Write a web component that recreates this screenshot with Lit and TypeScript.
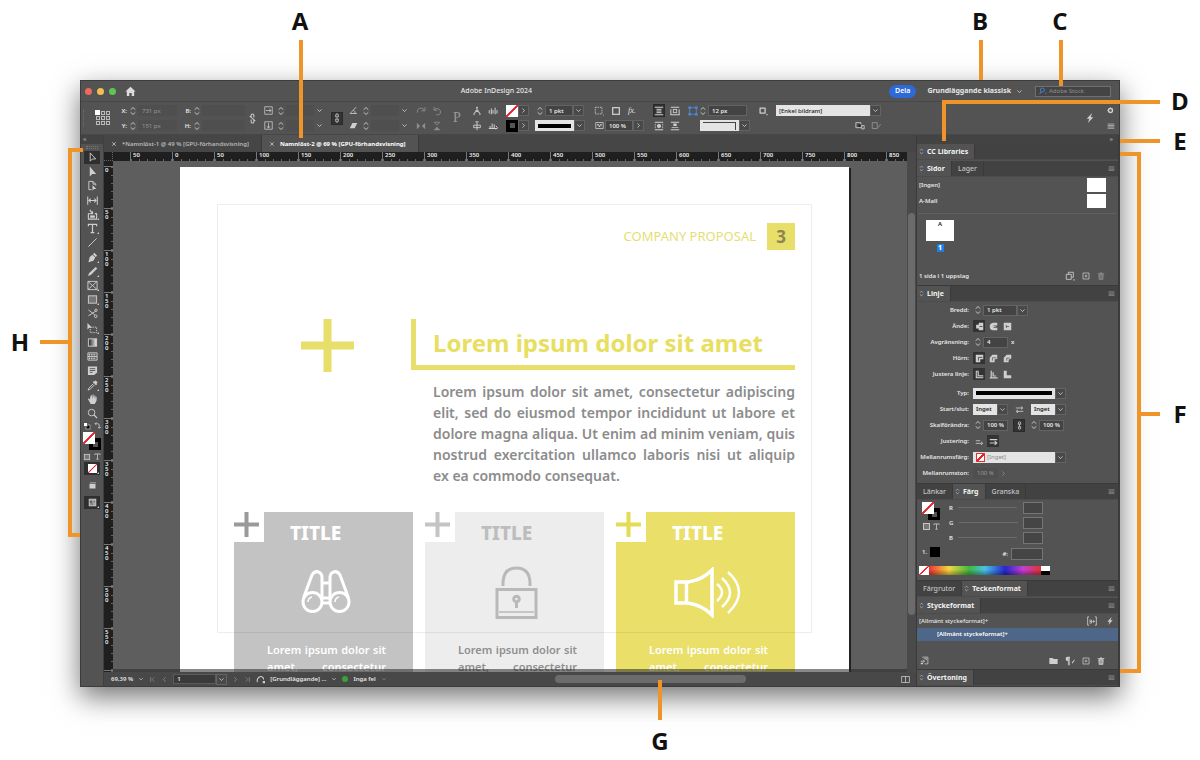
import { LitElement, html, svg, css, nothing } from "lit";
import { customElement, state } from "lit/decorators.js";
import { classMap } from "lit/directives/class-map.js";

const stroke = (d: string, w = 1) =>
  svg`<path d=${d} fill="none" stroke="currentColor" stroke-width=${w} stroke-linejoin="round" />`;
const fill = (d: string) => svg`<path d=${d} fill="currentColor" />`;

/* Every glyph is drawn on a 12 x 12 grid. */
const glyphs: Record<string, unknown> = {
  select: stroke("M3.5 1v9l2.4-2.4h3.6z"),
  direct: fill("M3 .5v11l2.8-2.9H10z"),
  page: [stroke("M5 10.500H2v-9h4.500l3 3V6M6.500 1.500v3h3"), fill("M6 5.500v6l1.700-1.600h2.500z")],
  gap: stroke("M.8 1.500v9M11.200 1.500v9M2 6h8M4 4 2 6l2 2M8 4l2 2-2 2", 1.1),
  collect: [stroke("M1.500 5v6h9V5H8.500M1.500 5H3M4 8.500h4M3 1l3 4M6 2.500V5H3.500", 1.200), fill("M3.500 7h5v2.500h-5z")],
  type: stroke("M1.500 3.500V1.600h9v1.900M6 1.600v9M4 10.600h4", 1.3),
  line: stroke("M1.500 10.500l9-9", 1),
  pen: [fill("M8 .8 11 4 9.500 5.500 6.500 2.500zM6 3l3 3-2 3.500-5.500 1.700L3 5.500z")],
  pencil: fill("M9.500 1 11.200 2.700 4.500 9.600 1 11l1.400-3.500zM9 .7z"),
  frame: stroke("M1 1.500h10v9H1zM1 1.500l10 9M11 1.500l-10 9"),
  rect: [svg`<rect x="1.500" y="2" width="9" height="8" fill="#777" stroke="currentColor" />`],
  scissors: [stroke("M1.500 2l7 5.500M1.500 8.500l8-5"), svg`<circle cx="9.500" cy="9" r="1.500" fill="none" stroke="currentColor" /><circle cx="9.800" cy="2.500" r="1.300" fill="none" stroke="currentColor" />`],
  transform: [svg`<path d="M3.500 4.500h7v6h-7z" fill="none" stroke="currentColor" stroke-dasharray="1.500 1" />`, fill("M.5 0v7l2-1.800h3z")],
  gradient: [svg`<defs><linearGradient id="gr"><stop offset="0" stop-color="#222" /><stop offset="1" stop-color="#eee" /></linearGradient></defs><rect x="1.500" y="2" width="9" height="8" fill="url(#gr)" stroke="currentColor" />`],
  feather: [stroke("M1 2h10v8H1zM1 6h10"), svg`<path d="M2 4h8M2 8h8" stroke="currentColor" stroke-width="2" stroke-dasharray="1.500 1" />`],
  note: svg`<path d="M1 1.500h10V8L8 11H1z" fill="currentColor" /><path d="M3 4h6M3 6h6M3 8h3" stroke="#535353" />`,
  dropper: [fill("M8 1.500 9.500.5l2 2-1 1.500.5.500-1.200 1.200-3.500-3.500L7.500 1z"), stroke("M7 4 2 9l-.8 2L3.500 10l5-5")],
  hand: fill("M3 6 1.500 4.500 1 5.500 4 11h4.500L10.500 7V3H9.500v3L9 1.500H8V5.500L7 .5H6l.2 5L5 1.200 4 1.500z"),
  zoom: [svg`<circle cx="5" cy="5" r="3.600" fill="none" stroke="currentColor" />`, stroke("M7.700 7.700 11 11", 1.4)],
  swap: stroke("M3 2.500h4q2.500 0 2.500 3.500v3M5 .5l-2 2 2 2M7.500 7.500l2 2 2-2", 1.2),
  mini: [svg`<rect x="4.500" y="4.500" width="6" height="6" fill="#000" stroke="currentColor" /><rect x="1" y="1" width="6" height="6" fill="#fff" stroke="#333" />`],
  box: svg`<rect x="2" y="2" width="8" height="8" fill="#777" stroke="currentColor" stroke-width="1.200" />`,
  screen: [fill("M2 4h8v6H2z"), stroke("M2.500 2.500h8")],
  preview: [svg`<rect x="1.500" y="1.500" width="9" height="9" fill="#aaa" stroke="currentColor" />`, svg`<path d="M3 4h2v2H3zM7 5h2M3 8h4" stroke="#444" fill="none" />`],
  home: fill("M6 .8 11.500 6H10v5H7.300V7.500H4.700V11H2V6H.5z"),
  down: stroke("M2.500 4.200 6 7.800l3.500-3.600", 1.4),
  right: stroke("M4.200 2.500 7.800 6 4.200 9.500", 1.4),
  left: stroke("M7.800 2.500 4.200 6l3.600 3.500", 1.4),
  first: stroke("M3 2v8M9 2.500 5.500 6 9 9.500", 1.3),
  last: stroke("M9 2v8M3 2.500 6.500 6 3 9.500", 1.3),
  spin: stroke("M2.500 4 6 .8 9.500 4M2.500 8 6 11.200 9.500 8", 1.3),
  sort: stroke("M3.500 4.500 6 2l2.500 2.500M3.500 7.500 6 10l2.500-2.500", 1.1),
  close: stroke("M2.500 2.500l7 7M9.500 2.500l-7 7", 1.5),
  menu: stroke("M1 3h10M1 5.200h10M1 7.400h10M1 9.500h10", 1),
  bolt: fill("M8.500 0 2 7h3.200L3.500 12 10 5H6.800z"),
  gear: svg`<circle cx="6" cy="6" r="3.400" fill="none" stroke="currentColor" stroke-width="2.400" /><path d="M6 0v12M0 6h12M2 2l8 8M10 2l-8 8" stroke="currentColor" stroke-dasharray="1.800 20" />`,
  chain: stroke("M4.500 5V2.500q0-1.500 1.500-1.500t1.500 1.500V5M4.500 7v2.500q0 1.500 1.500 1.500t1.500-1.500V7M6 3.500v5", 1.1),
  unchain: stroke("M4.500 5V2.500q0-1.500 1.500-1.500t1.500 1.500V5M4.500 7v2.500q0 1.500 1.500 1.500t1.500-1.500V7M3 3.500l6 5", 1.1),
  scaleX: stroke("M1 1v10M11 1v10M1 1h10M1 11h10M2.500 6h7M7 4l2.500 2L7 8", 1),
  scaleY: stroke("M1 1h10v10H1zM6 2.500v7M4 7l2 2.500L8 7", 1),
  angle: stroke("M9.500 1.500 1.500 10h9M6 5.500q2.500 1.500 2 4.500", 1.1),
  shear: fill("M4.500 2.500H11L7.500 9.500H1z"),
  cw: stroke("M1.500 8q0-5.500 4.500-5.500 3 0 4 3M10.800 1.500v4.300H6.500", 1.1),
  ccw: stroke("M3 4.500Q5 2 8 3.500t2 5-5 1.500M2.500 1v4h4", 1.1),
  flipH: [fill("M1 2l4 4-4 4zM11 2 7 6l4 4z")],
  flipV: [fill("M2 11l4-4 4 4z"), stroke("M2.500 1.500h7L6 5z")],
  tree: stroke("M6 1v5M3.500 6h5M2.500 11V8.500L6 6l3.500 2.500V11M5 2h2", 1.2),
  tree2: stroke("M6 1v10M2 5h8v3H2zM4 1h4", 1.1),
  bars: stroke("M1.500 5v4M4 3v7M6 5v4M8.500 2v8M10.800 5v4", 1.2),
  bars2: stroke("M1 9h10M2.500 9V6M5 9V3M7.500 9V4M9.500 6l2 2-2 2", 1.2),
  dashed: svg`<rect x="1.500" y="1.500" width="8" height="8" fill="none" stroke="currentColor" stroke-dasharray="1.800 1" /><path d="M11 11h1" stroke="currentColor" />`,
  square: svg`<rect x="2" y="2" width="8" height="8" fill="none" stroke="currentColor" stroke-width="1.500" />`,
  opacity: [stroke("M1 2h10v8H1z"), svg`<path d="M3 4h2v2H3zM7 4h2v2H7zM5 6h2v2H5z" fill="currentColor" />`],
  wrap1: stroke("M1 1.500h10M3 4h6M3 6h6M3 8h6M1 10.500h10", 1.2),
  wrap2: [stroke("M1 1.500h10M1 4v7M11 4v7M1 10.500h10", 1.200), svg`<rect x="4" y="4" width="4" height="4" fill="none" stroke="currentColor" />`],
  wrap3: [stroke("M1 1.500h10M1 10.500h10M1 4h1M1 6h1M1 8h1M10 4h1M10 6h1M10 8h1", 1.200), svg`<circle cx="6" cy="6" r="2.500" fill="currentColor" />`],
  wrap4: [stroke("M1 1.500h10M1 10.500h10", 1.200), fill("M4 3h4v3H4zM2 7.500h8v1H2z")],
  corner: [stroke("M2 2h8v8H2z"), fill("M.5.5h3v3h-3zM8.500.5h3v3h-3zM.5 8.500h3v3h-3zM8.500 8.500h3v3h-3z")],
  objstyle: [stroke("M2.500 2.500h6v6h-6z", 1.5), fill("M10 9.500h1.500V11H10z")],
  clear: [stroke("M1 2h6v6H1z"), svg`<path d="M4 4h3v3H4z" fill="#222" /><path d="M8 5.500h3v4H8z" fill="none" stroke="currentColor" />`],
  edit: stroke("M1.500 2h6v7h-6zM8.500 8l3-4", 1.2),
  search: [svg`<circle cx="5" cy="4.500" r="3" fill="none" stroke="currentColor" stroke-width="1.200" />`, stroke("M3 7 1 10.500M9 9.500h2", 1.4)],
  capA: svg`<path d="M5 1h6v10H5V8.500H1.500v-5H5z" fill="currentColor" /><path d="M6 6h4" stroke="#333" />`,
  capB: svg`<path d="M5.500 1H11v3.500H6v3h5V11H5.500Q1 10.500 1 6t4.500-5z" fill="currentColor" /><path d="M5 6h4" stroke="currentColor" />`,
  capC: svg`<path d="M1 1h10v10H1z" fill="currentColor" /><path d="M4 6h4M4.500 4v4" stroke="#555" />`,
  joinA: svg`<path d="M1 1h10v6H7v4H1z" fill="currentColor" /><path d="M4.500 9V4.500H10" stroke="#333" fill="none" />`,
  joinB: svg`<path d="M4.500 1H11v5.500L7.500 7v4H1V5z" fill="currentColor" /><path d="M4.500 9V5H10" stroke="#555" fill="none" />`,
  joinC: svg`<path d="M5 1h6v5L7.500 7.500V11H1V5z" fill="currentColor" /><path d="M5 9V5.500H9" stroke="#555" fill="none" />`,
  alignA: svg`<path d="M1 1h4v6h6v4H1z" fill="currentColor" /><path d="M3 2v7h8" stroke="#333" fill="none" />`,
  alignB: stroke("M3 1v9.500h8.500M5.500 3v5h4M1 10.500h2", 1.6),
  alignC: svg`<path d="M1 1h4v6h6v4H1z" fill="currentColor" />`,
  swapLR: stroke("M1 4h9M8 2l2.500 2L8 6M11 8.500H2M4 6.500 1.500 8.500l2.500 2", 1.1),
  arrowA: stroke("M1 5h6M1 8.500h8M8 6.500l2.500 2-2.500 2", 1.1),
  arrowB: stroke("M1 3.500h10M1 8h8M7.500 5.500l3 2.500-3 2.500", 1.4),
  sheets: [stroke("M1.500 4h6v6h-6z"), stroke("M4 4V1.500h6v6H8", 1), fill("M10 10h1.500v1.500H10z")],
  plusbox: stroke("M1.500 1.500h9v9h-9zM6 4v4M4 6h4", 1.1),
  trash: svg`<path d="M2 3.500h8l-.7 8H2.700zM1 2h10v1H1zM4.500.8h3v1h-3z" fill="currentColor" /><path d="M4.500 5v5M6 5v5M7.500 5v5" stroke="#535353" stroke-width=".7" />`,
  folder: fill("M.5 2.500h4.500l1 1.500h5.500v6.500H.5z"),
  pilcrow: [fill("M5 1H3Q.8 1.200.8 3.500T3 6h.5v5h1V2h.7v9H6V1zM8 8l3.500-4v1.500L9 9z")],
  load: [stroke("M3 1.500h7.500v9H6M1 7h5M4 5l2 2-2 2M5.500 3.500h3v2"), fill("M1 9h3v2H1z")],
  aplus: stroke("M2.500 1H.8v10h1.700M9.500 1h1.700v10H9.500M3 8.500h2.500V5H3M3 6.700h2.500M6.500 6.500h3M8 5v3", 1),
  spread: stroke("M.8 2h10.400v8H.8zM6 2v8", 1),
  sync: [stroke("M2 9.500Q.5 5.500 4 3t6 1.500V6", 1.4), fill("M9 8h3v3H9z")],
};

const icon = (name: string, size = 10, tone = "") =>
  html`<svg class="icon ${tone}" width=${size} height=${size} viewBox="0 0 12 12" aria-hidden="true">${glyphs[name]}</svg>`;

interface Tool { name: string; label: string; more?: boolean }

const tools: Tool[] = [
  { name: "select", label: "Markering" },
  { name: "direct", label: "Direktmarkering" },
  { name: "page", label: "Sida" },
  { name: "gap", label: "Mellanrum" },
  { name: "collect", label: "Innehållsinsamlare", more: true },
  { name: "type", label: "Text", more: true },
  { name: "line", label: "Linje" },
  { name: "pen", label: "Ritstift", more: true },
  { name: "pencil", label: "Penna", more: true },
  { name: "frame", label: "Rektangelram", more: true },
  { name: "rect", label: "Rektangel", more: true },
  { name: "scissors", label: "Sax" },
  { name: "transform", label: "Omforma", more: true },
  { name: "gradient", label: "Övertoning" },
  { name: "feather", label: "Övertoningskant" },
  { name: "note", label: "Anteckning" },
  { name: "dropper", label: "Pipett", more: true },
  { name: "hand", label: "Hand" },
  { name: "zoom", label: "Zoom" },
];

const paragraph = [
  "Lorem ipsum dolor sit amet, consectetur adipiscing",
  "elit, sed do eiusmod tempor incididunt ut labore et",
  "dolore magna aliqua. Ut enim ad minim veniam, quis",
  "nostrud exercitation ullamco laboris nisi ut aliquip",
  "ex ea commodo consequat.",
];

const pictures: Record<string, unknown> = {
  binoculars: html`<svg width="50" height="44" viewBox="0 0 50 44" fill="none" stroke="#fff" stroke-width="3">
    <circle cx="11.500" cy="32" r="9.500" /><circle cx="38.500" cy="32" r="9.500" />
    <path d="M2.500 28 11 5q3-5 7.500-2.500 2.500 1.500 2.500 5V30M47.500 28 39 5q-3-5-7.500-2.500-2.500 1.500-2.500 5V30M21 13h8M21 28h8M21 33h8" />
    <path d="M7 32q0-4 4-5M34 32q0-4 4-5" stroke-width="1.500" /></svg>`,
  lock: html`<svg width="43" height="53" viewBox="0 0 43 53" fill="none" stroke="#b9b9b9" stroke-width="3">
    <path d="M2 23.500h39v28H2zM8 20v-4Q9 2 21.500 2T35 16v4" /><path d="M4 46h35" stroke-width="1.500" />
    <circle cx="21.500" cy="33" r="2.800" stroke-width="3" /><path d="M21.500 35v7" /></svg>`,
  speaker: html`<svg width="67" height="51" viewBox="0 0 67 51" fill="none" stroke="#fff" stroke-width="3.500">
    <path d="M2 15h12Q28 13 38 3v45Q28 38 14 36H2zM12.500 15v21" />
    <path d="M43 17q10 8 0 17M48 11q16 15 0 29M54 5q22 20 0 41" stroke-width="2.500" /></svg>`,
};

const cards = [
  { tone: "dark", mark: "#9a9a9a", picture: "binoculars" },
  { tone: "pale", mark: "#c4c4c4", picture: "lock" },
  { tone: "yellow", mark: "#e5dc55", picture: "speaker" },
];

@customElement("app-root")
export class AppRoot extends LitElement {
  @state() private tool = "select";

  static styles = css`
    :host {
      --bar: #535353;
      --deep: #434343;
      --ink: #e6e6e6;
      --gold: #e8de6a;
      display: block;
      position: relative;
      min-height: 100vh;
      background: #fff;
      font: 600 6px/8px "Noto Sans", "Open Sans", sans-serif;
      color: var(--ink);
      overflow: hidden;
    }
    * { box-sizing: border-box; }
    h1, h2, h3, p { margin: 0; font: inherit; }
    button, input, select { font: inherit; color: inherit; margin: 0; padding: 0; border: 0; border-radius: 0; background: none; min-width: 0; }
    button { display: inline-flex; align-items: center; justify-content: center; }
    select { appearance: none; }
    svg { display: block; flex: none; }
    .icon { color: #cfcfcf; }
    .dim { color: #8c8c8c; }
    .blue { color: #4a8be0; }

    .window { display: flex; flex-direction: column; margin: 80px 80px 73px; background: var(--bar); border: 1px solid #3c3c3c; box-shadow: 0 10px 26px rgba(0, 0, 0, 0.55); }
    .row { display: flex; align-items: center; }

    /* title bar */
    .title { display: grid; grid-template-columns: 11fr auto 17fr; align-items: center; height: 21px; border-bottom: 1px solid #484848; font: 500 7px/10px "Noto Sans", sans-serif; }
    .title .start { gap: 5px; padding-left: 4px; }
    .lamp { width: 7px; height: 7px; border-radius: 50%; }
    .red { background: #ec6a5e; }
    .amber { background: #f4bf4f; }
    .green { background: #61c554; }
    .start .icon { margin-left: 4px; color: #dcdcdc; }
    .title .end { justify-content: flex-end; padding-right: 8px; }
    .share { height: 13px; padding: 0 6px; border-radius: 7px; background: #2e69d8; color: #fff; font-weight: 600; }
    .workspace { gap: 5px; margin: 0 12px 0 11px; font-weight: 700; white-space: nowrap; }
    .stock { gap: 2px; width: 76px; height: 11px; padding-left: 3px; border: 1px solid #707070; background: #444; font-size: 6px; font-weight: 400; }
    .stock input { width: 60px; }
    ::placeholder { color: #8f8f8f; opacity: 1; }

    /* control strip */
    .control { display: grid; grid-template-columns: 34px 64px 64px 18px 67px 18px 65px 36px 20px 36px 32px 56px 58px 36px 70px 130px 1fr; align-items: center; height: 33px; border-bottom: 1px solid #474747; }
    .pair { display: grid; grid-template-rows: 15px 15px; align-items: center; }
    .pair.quad { grid-template-columns: 16px 16px; justify-content: center; justify-items: center; }
    .line { display: flex; align-items: center; }
    .lined { padding-left: 3px; }
    .spaced { gap: 3px; }
    .loose { gap: 7px; }
    .grip { width: 2px; height: 16px; border-left: 1px dotted #6d6d6d; }
    .anchor { gap: 10px; padding-left: 2px; }
    .lead { width: 12px; text-align: right; margin-right: 1px; }
    .field { display: flex; align-items: center; height: 12px; }
    .field > .icon { margin: 0 1px; }
    .field input { height: 11px; padding-left: 3px; background: #434343; border: 1px solid #636363; }
    .ghost input { border-color: transparent; background: #4f4f4f; color: #999; font-weight: 400; }
    .drop { flex: none; width: 11px; height: 11px; background: #494949; border: 1px solid #636363; }
    .ghost .drop { background: none; border-color: transparent; }
    .pressed { background: #333; border: 1px solid #2a2a2a; }
    .w1 { width: 25px; }
    .w2 { width: 28px; }
    .w3 { width: 34px; }
    .w4 { width: 39px; }
    .w5 { width: 43px; }
    .white { display: flex; align-items: center; height: 11px; background: #e4e4e4; color: #222; padding: 0 3px; }
    .white.style { width: 39px; }
    .bar { flex: 1; height: 4px; background: #000; }
    .white.edge { width: 39px; }
    .edge span { flex: 1; height: 8px; border-top: 1px solid #444; border-right: 1px solid #444; }
    .edged { padding-left: 15px; }
    .obj { width: 94px; margin-left: 8px; font-weight: 500; }
    .none { display: block; background: linear-gradient(to bottom right, #fff 44%, #e3262f 46%, #e3262f 54%, #fff 56%); }
    .none.small { width: 9px; height: 9px; }
    .none.framed { flex: none; width: 9px; height: 9px; border: 1px solid #d33; background: linear-gradient(to bottom right, #fff 40%, #e3262f 42%, #e3262f 58%, #fff 60%); }
    .sw { width: 12px; height: 12px; }
    .ink { display: grid; place-items: center; background: #000; }
    .ink::after { content: ""; width: 5px; height: 5px; background: #555; }
    .big { font: 14px/26px "Liberation Serif", serif; color: #9a9a9a; justify-self: center; }
    .fx { font: italic 8px/10px "Liberation Serif", serif; }
    .tight { width: 12px; height: 13px; }
    .centre { justify-self: center; }
    .farend { display: flex; align-items: center; justify-content: flex-end; gap: 6px; padding-right: 4px; }
    .farend.apart { gap: 12px; }

    /* work area */
    .work { display: grid; grid-template-columns: 23px minmax(0, 1fr) 203px; flex: 1; }
    .toolbox { display: flex; flex-direction: column; align-items: center; border-right: 1px solid #3f3f3f; }
    .strip { align-self: stretch; height: 9px; background: var(--deep); color: #aaa; padding: 0 2px; line-height: 8px; }
    .dots { width: 12px; height: 3px; margin: 2px 0; border-top: 1px dotted #777; border-bottom: 1px dotted #777; }
    .tools { display: flex; flex-direction: column; justify-content: space-between; min-height: 269px; }
    .tool { position: relative; width: 16px; height: 13px; }
    .tool.on { background: #2f2f2f; }
    .more::after { content: ""; position: absolute; right: 1px; bottom: 1px; border: 1px solid transparent; border-right-color: #ccc; border-bottom-color: #ccc; }
    .swatches { position: relative; display: flex; width: 18px; height: 18px; margin: 1px 0; }
    .swatches .ink { width: 12px; height: 12px; margin: 6px 0 0 6px; }
    .swatches .none { position: absolute; top: 0; left: 0; width: 12px; height: 12px; }
    .minor { justify-content: space-between; width: 18px; height: 11px; }
    .gapped { margin-top: 4px; }

    .doc { display: grid; grid-template: 17px 9px minmax(0, 1fr) 14px / 9px minmax(0, 1fr) 9px; }
    .tabs { grid-column: 1 / -1; display: flex; background: #464646; }
    .tabs button { gap: 5px; padding: 0 12px 0 7px; color: #b9b9b9; border-right: 1px solid #3b3b3b; white-space: nowrap; }
    .tabs button.on { background: var(--bar); color: #fff; font-weight: 700; }
    .ruler { background: #1f1f1f; color: #eee; overflow: hidden; }
    .cornerbox { border-right: 1px dotted #666; border-bottom: 1px dotted #666; }
    .ruler.h { display: flex; padding-left: 17px; }
    .ruler.h span { flex: none; width: 42px; padding-left: 2px; line-height: 7px; border-left: 1px solid #777; background: repeating-linear-gradient(90deg, #666 0 1px, transparent 1px 8px) bottom / 100% 2px no-repeat; }
    .ruler.v { display: flex; flex-direction: column; padding-top: 5px; height: 0; min-height: 100%; }
    .ruler.v span { flex: none; height: 42px; padding: 1px 0 0 1px; border-top: 1px solid #777; line-height: 5px; background: repeating-linear-gradient(#666 0 1px, transparent 1px 8px) right / 2px 100% no-repeat; }
    .ruler.v i { display: block; font-style: normal; height: 5px; }
    .scroll-v { display: flex; padding: 52px 1px 57px; background: #4a4a4a; }
    .scroll-v div { flex: 1; border-radius: 4px; background: #6b6b6b; }
    .upper { grid-row: 2; grid-column: 3; background: #4a4a4a; }
    .canvas { position: relative; display: flex; background: #5e5e5e; padding: 6px 58px 0 67px; overflow: hidden; height: 0; min-height: 100%; }
    .canvas::after { content: ""; position: absolute; inset: auto 0 0; height: 3px; background: rgba(40, 40, 40, 0.55); }

    /* the laid-out page */
    .sheet { position: relative; flex: 1; height: 505px; padding: 56px 54px 0; background: #fff; box-shadow: 2px 1px 0 #222; color: #8b8b8b; overflow: hidden; }
    .guides { position: absolute; inset: 37px 37px auto; height: 429px; border: 1px solid rgba(0, 0, 0, 0.07); }
    .masthead { display: flex; justify-content: flex-end; align-items: center; gap: 11px; color: #e6de74; font: 400 13px/27px "Noto Sans", sans-serif; }
    .masthead strong { width: 28px; text-align: center; background: var(--gold); color: #8b8552; font: 700 17px/27px "Noto Sans", sans-serif; }
    .hero { display: grid; grid-template-columns: 53px minmax(0, 384px); justify-content: end; gap: 57px; margin-top: 69px; }
    .hero h1 { height: 51px; padding-left: 17px; border-left: 5px solid var(--gold); border-bottom: 5px solid var(--gold); color: #e8de5f; font: 700 24px/48px "Noto Sans", sans-serif; white-space: nowrap; }
    .copy { width: 362px; margin: 9px 0 0 auto; font: 600 14px/21px "Noto Sans", sans-serif; color: #8c8c8c; }
    .copy span { display: block; text-align-last: justify; white-space: nowrap; }
    .copy span:last-child { text-align-last: left; }
    .cards { display: grid; grid-template-columns: repeat(3, minmax(0, 1fr)); gap: 12px; margin-top: 26px; }
    .card { display: grid; grid-template: 42px 76px auto / 30px minmax(0, 1fr); height: 180px; }
    .card.dark { background: #c3c3c3; color: #fff; }
    .card.pale { background: #ededed; color: #bdbdbd; }
    .card.yellow { background: #e9df69; color: #fff; }
    .badge { width: 30px; height: 30px; background: #fff; }
    .card h2 { padding-left: 26px; font: 800 19px/42px "Noto Sans", sans-serif; }
    .art { grid-column: 1 / -1; display: grid; place-items: center; padding-left: 4px; }
    .card p { grid-column: 1 / -1; padding: 11px 27px 0 33px; font: 600 11px/17px "Noto Sans", sans-serif; white-space: nowrap; }
    .card.pale p { color: #8f8f8f; }
    .card p span { display: block; text-align-last: justify; }

    .status { grid-column: 1 / -1; display: grid; grid-template-columns: auto 1fr 15px; align-items: center; background: #484848; }
    .status .row { gap: 5px; padding-left: 7px; white-space: nowrap; }
    .status input { width: 43px; height: 10px; padding-left: 3px; background: #3a3a3a; border: 1px solid #5b5b5b; }
    .ok { width: 6px; height: 6px; border-radius: 50%; background: #3aa137; }
    .track { padding: 0 155px 0 168px; }
    .thumb { height: 8px; border-radius: 4px; background: #6c6c6c; }

    /* panels */
    .panels { border-left: 1px solid #3a3a3a; border-right: 1px solid #3a3a3a; }
    .panels > .strip { text-align: right; padding-right: 5px; }
    .head { display: flex; height: 16px; background: #424242; border-bottom: 1px solid #4c4c4c; font: 500 7px/15px "Noto Sans", sans-serif; }
    .head button { gap: 2px; padding: 0 6px 0 1px; color: #c4c4c4; border-right: 1px solid #3a3a3a; }
    .head button.on { background: var(--bar); color: #f2f2f2; font-weight: 700; }
    .head button.off { padding: 0 6px; }
    .head .more-menu { margin-left: auto; border: 0; padding: 0 3px; }
    .head .more-menu .icon { color: #a0a0a0; }
    .head + .head { margin-top: 1px; }
    .panel { padding: 0 2px; border-bottom: 1px solid #3a3a3a; }
    .master { display: flex; justify-content: space-between; align-items: center; height: 16px; padding-right: 10px; }
    .master i { width: 19px; height: 14px; background: #fff; }
    .pages { height: 54px; margin-top: 4px; padding: 6px 7px; border-top: 1px solid #626262; }
    .leaf { width: 28px; text-align: center; color: #222; }
    .leaf div { height: 21px; margin: 0 0 3px; background: #fff; line-height: 9px; }
    .leaf b { display: inline-block; width: 7px; background: #1f7fe6; color: #fff; }
    .foot { display: flex; align-items: center; gap: 7px; height: 18px; padding-right: 11px; }
    .foot span { margin-right: auto; }
    .settings { height: 182px; }
    .set { display: grid; grid-template-columns: 50px minmax(0, 1fr); align-items: center; gap: 4px; height: 16px; white-space: nowrap; }
    .set > label, .set > .name { text-align: right; }
    .rule { height: 3px; }
    .opts { display: flex; gap: 2px; }
    .opts button { width: 12px; height: 12px; }
    .opts .pressed { border: 0; }
    .wide { width: 82px; gap: 2px; }
    .wide input { color: #8a8a8a; font-weight: 400; }
    .settings select { width: 24px; }
    .mid { margin: 0 7px; }
    .knot { margin: 0 4px 0 5px; }
    .colour { display: grid; grid-template-columns: 24px minmax(0, 96px); column-gap: 4px; padding: 0 0 0 2px; height: 81px; align-content: start; }
    .inset { padding-left: 3px; padding-top: 1px; }
    .chan { display: flex; align-items: center; justify-content: space-between; height: 15px; padding-left: 2px; }
    .chan input[type="range"] { appearance: none; width: 59px; height: 1px; background: #6b6b6b; }
    .chan input[type="range"]::-webkit-slider-thumb { appearance: none; width: 0; height: 0; }
    .chan input[type="text"] { width: 20px; height: 12px; border: 1px solid #757575; background: #454545; }
    .hex { display: flex; justify-content: flex-end; align-items: center; gap: 3px; height: 18px; }
    .hex input { width: 32px; height: 12px; border: 1px solid #757575; background: #454545; }
    .black { width: 10px; height: 10px; background: #000; }
    .spectrum { grid-column: 1 / -1; display: grid; grid-template-columns: 10px 112px 9px; height: 9px; margin-top: 3px; }
    .rainbow { background: linear-gradient(to top, rgba(0, 0, 0, 0.35), transparent 60%), linear-gradient(90deg, #e33, #f5d742 18%, #3fb83f 36%, #49c2e6 50%, #2626d0 68%, #c33fd0 84%, #e0332f); }
    .bw { background: linear-gradient(#fff 50%, #000 50%); }
    .styles { height: 56px; padding: 0; }
    .styles .top { display: flex; align-items: center; gap: 9px; height: 14px; padding: 0 4px 0 2px; font-weight: 500; }
    .top span { margin-right: auto; }
    .picked { height: 13px; padding-left: 20px; background: #4e6687; line-height: 12px; color: #fff; }
    .styles .foot { height: 17px; margin-top: 11px; padding: 0 13px 0 3px; gap: 7px; }

    /* callouts */
    .callout { position: absolute; top: 0; pointer-events: none; }
    .callout.l { left: 0; }
    .callout.r { right: 0; }
    .callout.g { left: calc(50% + 40px); top: 675px; }
    .callout path { fill: none; stroke: #ee9428; stroke-width: 4; }
    .callout text { font: 700 24px "Open Sans", sans-serif; text-anchor: middle; fill: #111; }
  `;

  private spin(id: string, label: string, value: string, width: string, opts: { ghost?: boolean; drop?: string } = {}) {
    return html`<div class="field ${opts.ghost ? "ghost" : ""}">
      ${icon("spin", 8)}<input id=${id} class=${width} type="text" aria-label=${label} .value=${value} />
      ${opts.drop ? html`<button class="drop" aria-label="Visa ${label}">${icon(opts.drop, 7)}</button>` : nothing}
    </div>`;
  }

  private drop(label: string, name = "down") {
    return html`<button class="drop" aria-label=${label}>${icon(name, 7)}</button>`;
  }

  private head(names: string[], active: number, menu = true) {
    return html`<div class="head" role="tablist">
      ${names.map((n, i) => html`<button role="tab" aria-selected=${i === active} class=${i === active ? "on" : "off"}>
        ${i === active ? icon("sort", 7) : nothing}${n}</button>`)}
      ${menu ? html`<button class="more-menu" aria-label="Panelmeny">${icon("menu", 7)}</button>` : nothing}
    </div>`;
  }

  private swatches() {
    return html`<div class="swatches"><span class="ink"></span><span class="none"></span></div>`;
  }

  private titleBar() {
    return html`<header class="title">
      <div class="row start"><i class="lamp red"></i><i class="lamp amber"></i><i class="lamp green"></i>${icon("home", 11)}</div>
      <h1>Adobe InDesign 2024</h1>
      <div class="row end">
        <button class="share">Dela</button>
        <button class="workspace">Grundläggande klassisk ${icon("down", 7)}</button>
        <label class="row stock">${icon("search", 8, "blue")}<input type="search" placeholder="Adobe Stock" aria-label="Adobe Stock" /></label>
      </div>
    </header>`;
  }

  private quad(names: string[], tone = "") {
    return html`<div class="pair quad">${names.map((n) => icon(n, 10, tone))}</div>`;
  }

  private controlStrip() {
    return html`<section class="control">
      <div class="row anchor"><i class="grip"></i>
        <svg width="16" height="18" viewBox="0 0 16 18" fill="none" stroke="#bbb" aria-hidden="true">
          ${[0, 1, 2].map((r) => [0, 1, 2].map((c) => svg`<rect x=${1.5 + c * 5} y=${2.5 + r * 5} width="3" height="3" />`))}
          <path d="M0 1h5v5H0z" fill="#fff" stroke="none" />
        </svg>
      </div>
      <div class="pair">
        <div class="line"><label class="lead" for="x">X:</label>${this.spin("x", "X", "731 px", "w4", { ghost: true })}</div>
        <div class="line"><label class="lead" for="y">Y:</label>${this.spin("y", "Y", "151 px", "w4", { ghost: true })}</div>
      </div>
      <div class="pair">
        <div class="line"><label class="lead" for="b">B:</label>${this.spin("b", "B", "", "w5", { ghost: true })}</div>
        <div class="line"><label class="lead" for="h">H:</label>${this.spin("h", "H", "", "w5", { ghost: true })}</div>
      </div>
      <div class="centre">${icon("unchain", 11)}</div>
      <div class="pair">
        <div class="line lined spaced">${icon("scaleX", 9)}${this.spin("sx", "Skala X", "", "w2", { ghost: true, drop: "down" })}</div>
        <div class="line lined spaced">${icon("scaleY", 9)}${this.spin("sy", "Skala Y", "", "w2", { ghost: true, drop: "down" })}</div>
      </div>
      <button class="pressed tight centre" aria-label="Lås proportioner">${icon("chain", 10)}</button>
      <div class="pair">
        <div class="line lined spaced">${icon("angle", 9)}${this.spin("ra", "Vinkel", "", "w2", { ghost: true, drop: "down" })}</div>
        <div class="line lined spaced">${icon("shear", 9)}${this.spin("sh", "Skeva", "", "w2", { ghost: true, drop: "down" })}</div>
      </div>
      ${this.quad(["cw", "ccw", "flipH", "flipV"], "dim")}
      <span class="big">P</span>
      ${this.quad(["tree", "bars", "tree2", "bars2"])}
      <div class="pair">
        <div class="line lined"><span class="none sw"></span>${this.drop("Fyllning", "right")}</div>
        <div class="line lined"><span class="ink sw"></span>${this.drop("Linje", "right")}</div>
      </div>
      <div class="pair">
        ${this.spin("sw", "Linjebredd", "1 pkt", "w2", { drop: "down" })}
        <div class="line"><span class="white style"><i class="bar"></i></span>${this.drop("Linjetyp")}</div>
      </div>
      <div class="pair">
        <div class="line lined loose">${icon("dashed", 10)}${icon("square", 10)}<span class="fx">fx.</span></div>
        <div class="line lined field">${icon("opacity", 9)}<input class="w2" type="text" aria-label="Opacitet" .value=${"100 %"} />${this.drop("Opacitet", "right")}</div>
      </div>
      <div class="pair quad"><button class="pressed tight" aria-label="Ingen figursättning">${icon("wrap1", 10)}</button>${icon("wrap2")}${icon("wrap3")}${icon("wrap4")}</div>
      <div class="pair">
        <div class="line lined">${icon("corner", 10, "blue")}${this.spin("cr", "Hörnstorlek", "12 px", "w4")}</div>
        <div class="line edged"><span class="white edge"><span></span></span>${this.drop("Hörnform")}</div>
      </div>
      <div class="pair">
        <div class="line lined">${icon("objstyle", 10)}<select class="white obj" aria-label="Objektformat"><option>[Enkel bildram]</option></select>${this.drop("Objektformat")}</div>
        <div class="farend">${icon("clear", 10)}${icon("edit", 10, "dim")}</div>
      </div>
      <div class="farend apart">${icon("bolt", 10)}<div class="pair">${icon("gear", 7)}${icon("menu", 8)}</div></div>
    </section>`;
  }

  private toolbox() {
    return html`<nav class="toolbox" aria-label="Verktyg">
      <div class="strip">«</div><i class="dots"></i>
      <div class="tools">
        ${tools.map((t) => html`<button class=${classMap({ tool: true, on: this.tool === t.name, more: !!t.more })} aria-label=${t.label}
          @click=${() => (this.tool = t.name)}>${icon(t.name, 11)}</button>`)}
      </div>
      <div class="row minor">${icon("mini", 8)}${icon("swap", 8)}</div>
      ${this.swatches()}
      <div class="row minor">${icon("box", 8)}${icon("type", 7)}</div>
      <button class="tool on more" aria-label="Använd ingen"><span class="none small"></span></button>
      <button class="tool gapped" aria-label="Visningsläge">${icon("screen", 9)}</button>
      <button class="tool on more gapped" aria-label="Skärmläge">${icon("preview", 9)}</button>
    </nav>`;
  }

  private sheet() {
    return html`<article class="sheet">
      <div class="guides"></div>
      <div class="masthead">COMPANY PROPOSAL <strong>3</strong></div>
      <div class="hero">
        <svg width="53" height="53" viewBox="0 0 53 53" aria-hidden="true"><path d="M26.500 0v53M0 26.500h53" stroke="#e8de6a" stroke-width="8" /></svg>
        <h1>Lorem ipsum dolor sit amet</h1>
      </div>
      <p class="copy">${paragraph.map((l) => html`<span>${l}</span>`)}</p>
      <div class="cards">
        ${cards.map((c) => html`<section class="card ${c.tone}">
          <div class="badge"><svg width="25" height="25" viewBox="0 0 25 25" aria-hidden="true"><path d="M12.500 0v25M0 12.500h25" stroke=${c.mark} stroke-width="4" /></svg></div>
          <h2>TITLE</h2>
          <div class="art">${pictures[c.picture]}</div>
          <p><span>Lorem ipsum dolor sit</span><span>amet, consectetur</span></p>
        </section>`)}
      </div>
    </article>`;
  }

  private documentArea() {
    const across = [50, ...Array.from({ length: 18 }, (_, i) => i * 50)];
    const down = Array.from({ length: 13 }, (_, i) => String(i * 50));
    return html`<main class="doc">
      <div class="tabs" role="tablist">
        <button role="tab" aria-selected="false">${icon("close", 6)} *Namnlöst-1 @ 49 % [GPU-förhandsvisning]</button>
        <button role="tab" aria-selected="true" class="on">${icon("close", 6)} Namnlöst-2 @ 69 % [GPU-förhandsvisning]</button>
      </div>
      <div class="ruler cornerbox"></div>
      <div class="ruler h">${across.map((n) => html`<span>${n}</span>`)}</div>
      <div class="upper"></div>
      <div class="ruler v">${down.map((n) => html`<span>${[...n].map((d) => html`<i>${d}</i>`)}</span>`)}</div>
      <div class="canvas">${this.sheet()}</div>
      <div class="scroll-v"><div></div></div>
      <footer class="status">
        <div class="row">
          <span>69,39 %</span>${icon("down", 6)}${icon("first", 7, "dim")}${icon("left", 7, "dim")}
          <span class="field"><input type="text" aria-label="Sida" .value=${"1"} />${this.drop("Sidor")}</span>
          ${icon("right", 7, "dim")}${icon("last", 7, "dim")}${icon("sync", 9)}
          <span>[Grundläggande] ...</span>${icon("down", 6)}<i class="ok"></i><span>Inga fel</span>${icon("down", 6, "dim")}
        </div>
        <div class="track"><div class="thumb"></div></div>
        ${icon("spread", 9)}
      </footer>
    </main>`;
  }

  private options(names: string[], on: number) {
    return html`<div class="opts">${names.map((n, i) => html`<button aria-label=${n} class=${classMap({ pressed: i === on })}>${icon(n, 9)}</button>`)}</div>`;
  }

  private strokePanel() {
    return html`<div class="panel settings">
      <div class="set"><label for="width">Bredd:</label>${this.spin("width", "Bredd", "1 pkt", "w3", { drop: "down" })}</div>
      <div class="set"><span class="name">Ände:</span>${this.options(["capA", "capB", "capC"], 0)}</div>
      <div class="set"><label for="miter">Avgränsning:</label><div class="line spaced">${this.spin("miter", "Avgränsning", "4", "w1")}x</div></div>
      <div class="set"><span class="name">Hörn:</span>${this.options(["joinA", "joinB", "joinC"], 0)}</div>
      <div class="set"><span class="name">Justera linje:</span>${this.options(["alignA", "alignB", "alignC"], 0)}</div>
      <div class="rule"></div>
      <div class="set"><span class="name">Typ:</span><div class="line"><span class="white wide"><i class="bar"></i></span>${this.drop("Typ")}</div></div>
      <div class="set"><label for="from">Start/slut:</label><div class="line">
        <select id="from" class="white"><option>Inget</option></select>${this.drop("Start")}<span class="mid">${icon("swapLR", 9)}</span>
        <select class="white" aria-label="Slut"><option>Inget</option></select>${this.drop("Slut")}</div></div>
      <div class="set"><label for="sc1">Skalförändra:</label><div class="line">
        ${this.spin("sc1", "Skala start", "100 %", "w1")}<button class="pressed tight knot" aria-label="Länka">${icon("chain", 9)}</button>
        ${this.spin("sc2", "Skala slut", "100 %", "w1")}</div></div>
      <div class="set"><span class="name">Justering:</span>${this.options(["arrowA", "arrowB"], 1)}</div>
      <div class="set"><label for="gapc">Mellanrumsfärg:</label><div class="line">
        <span class="white wide"><i class="none framed"></i><input id="gapc" type="text" class="w5" .value=${"[Inget]"} /></span>${this.drop("Mellanrumsfärg")}</div></div>
      <div class="set"><label for="tint">Mellanrumston:</label><div class="field ghost"><input id="tint" class="w1" type="text" .value=${"100 %"} /><button class="drop" aria-label="Ton">${icon("right", 7, "dim")}</button></div></div>
    </div>`;
  }

  private colourPanel() {
    return html`<div class="panel colour">
      <div class="inset">${this.swatches()}<div class="row minor">${icon("box", 9)}${icon("type", 7)}</div></div>
      <div>${["R", "G", "B"].map((c) => html`<div class="chan"><label for="c${c}">${c}</label>
        <input type="range" aria-label="${c} reglage" /><input id="c${c}" type="text" /></div>`)}</div>
      <div class="inset"><div class="row minor"><span>1.</span><span class="black"></span></div></div>
      <div class="hex"><label for="hex">#:</label><input id="hex" type="text" /></div>
      <div class="spectrum"><span class="none"></span><span class="rainbow"></span><span class="bw"></span></div>
    </div>`;
  }

  private panels() {
    return html`<aside class="panels">
      <div class="strip">»</div>
      ${this.head(["CC Libraries"], 0, false)}
      ${this.head(["Sidor", "Lager"], 0)}
      <div class="panel">
        <div class="master">[Ingen]<i></i></div>
        <div class="master">A-Mall<i></i></div>
        <div class="pages"><div class="leaf"><div>A</div><b>1</b></div></div>
        <div class="foot"><span>1 sida i 1 uppslag</span>${icon("sheets", 10)}${icon("plusbox", 8)}${icon("trash", 8, "dim")}</div>
      </div>
      ${this.head(["Linje"], 0)}
      ${this.strokePanel()}
      ${this.head(["Länkar", "Färg", "Granska"], 1)}
      ${this.colourPanel()}
      ${this.head(["Färgrutor", "Teckenformat"], 1)}
      ${this.head(["Styckeformat"], 0)}
      <div class="panel styles">
        <div class="top"><span>[Allmänt styckeformat]+</span>${icon("aplus", 10)}${icon("bolt", 8)}</div>
        <div class="picked">[Allmänt styckeformat]+</div>
        <div class="foot">${icon("load", 9)}<span></span>${icon("folder", 9)}${icon("pilcrow", 10)}${icon("plusbox", 8)}${icon("trash", 8)}</div>
      </div>
      ${this.head(["Övertoning"], 0)}
    </aside>`;
  }

  private callouts() {
    return html`
      <svg class="callout l" width="340" height="760" viewBox="0 0 340 760">
        <path d="M301 40v98M83 150H70v385h10M40 342h30" />
        <text x="300" y="30">A</text><text x="20" y="351">H</text>
      </svg>
      <svg class="callout r" width="300" height="760" viewBox="900 0 300 760">
        <path d="M981 40v40M1061 40v46M944 141v-39h216M1120 141h40M1120 154h19v517h-19M1139 414h21" />
        <text x="980" y="30">B</text><text x="1060" y="30">C</text><text x="1180" y="110">D</text>
        <text x="1180" y="150">E</text><text x="1180" y="423">F</text>
      </svg>
      <svg class="callout g" width="40" height="85" viewBox="640 675 40 85">
        <path d="M660 680v40" /><text x="660" y="750">G</text>
      </svg>`;
  }

  render() {
    return html`<div class="window">
      ${this.titleBar()} ${this.controlStrip()}
      <div class="work">${this.toolbox()} ${this.documentArea()} ${this.panels()}</div>
    </div>
    ${this.callouts()}`;
  }
}
